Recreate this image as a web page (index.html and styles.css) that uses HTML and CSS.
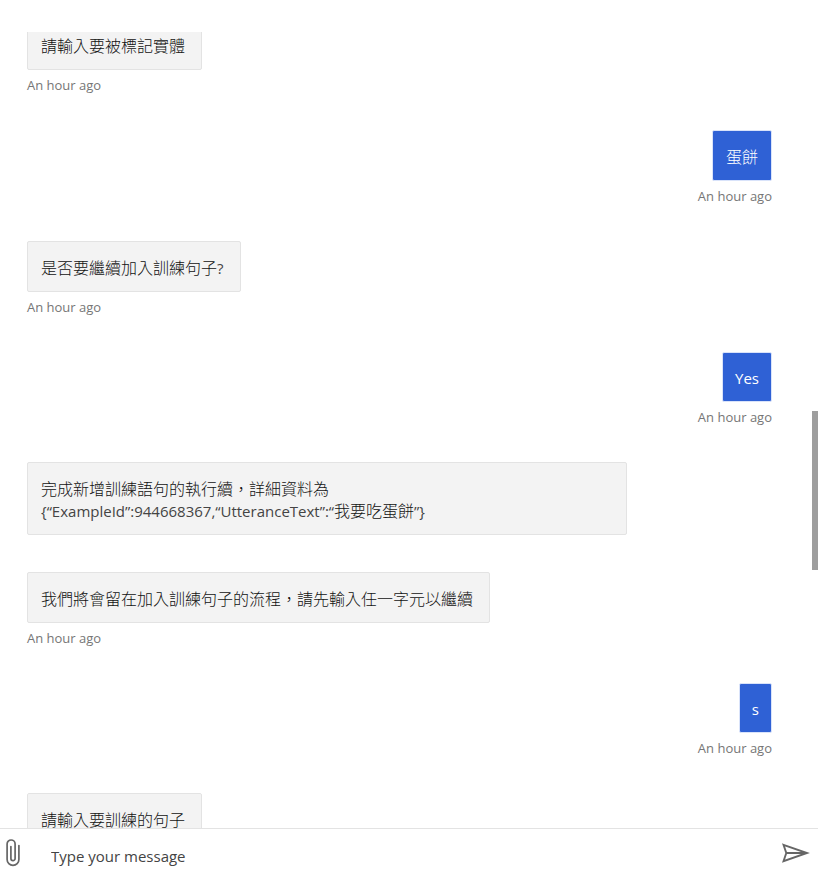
FILE: index.html
```html
<!DOCTYPE html>
<html lang="zh-Hant">
<head>
<meta charset="utf-8">
<meta name="viewport" content="width=device-width, initial-scale=1">
<title>Web Chat</title>
<link rel="stylesheet" href="styles.css">
</head>
<body>
<main class="chat">
  <section class="transcript" aria-label="Conversation">
    <ol class="messages">
      <li class="message bot">
        <p class="bubble">請輸入要被標記實體</p>
        <span class="time">An hour ago</span>
      </li>
      <li class="message user">
        <p class="bubble">蛋餅</p>
        <span class="time">An hour ago</span>
      </li>
      <li class="message bot">
        <p class="bubble">是否要繼續加入訓練句子<span class="latin">?</span></p>
        <span class="time">An hour ago</span>
      </li>
      <li class="message user">
        <p class="bubble short"><span class="latin">Yes</span></p>
        <span class="time">An hour ago</span>
      </li>
      <li class="message bot">
        <p class="bubble full">完成新增訓練語句的執行續，詳細資料為<br><span class="latin">{“ExampleId”:944668367,“UtteranceText”:“</span>我要吃蛋餅<span class="latin">”}</span></p>
      </li>
      <li class="message bot">
        <p class="bubble">我們將會留在加入訓練句子的流程，請先輸入任一字元以繼續</p>
        <span class="time">An hour ago</span>
      </li>
      <li class="message user">
        <p class="bubble short"><span class="latin">s</span></p>
        <span class="time">An hour ago</span>
      </li>
      <li class="message bot">
        <p class="bubble">請輸入要訓練的句子</p>
      </li>
    </ol>
    <div class="scroll-thumb"></div>
  </section>
  <form class="composer">
    <button class="icon-button" type="button" aria-label="Attach file">
      <svg width="14" height="28" viewBox="0 0 14 28" fill="none" stroke="#666" stroke-width="1.7" stroke-linecap="round">
        <path d="M12.900 6.500V20.500a5.900 5.900 0 0 1-11.800 0V5a4 4 0 0 1 8 0V19.500a2.100 2.100 0 0 1-4.200 0V7.500"/>
      </svg>
    </button>
    <input class="entry" type="text" aria-label="Type your message" placeholder="Type your message">
    <button class="icon-button" type="button" aria-label="Send">
      <svg width="28" height="20" viewBox="0 0 28 20" fill="none" stroke="#666" stroke-width="1.900">
        <path d="M1.500 1.800L25 10L1.500 18.200L4.300 10ZM4.300 10H24"/>
      </svg>
    </button>
  </form>
</main>
</body>
</html>
```
FILE: styles.css
```css
* {
  box-sizing: border-box;
}

body {
  margin: 0;
  background: #fff;
  color: #111;
  font-family: "Open Sans", "Noto Sans CJK TC", sans-serif;
}

.chat {
  display: flex;
  flex-direction: column;
  height: 100vh;
  padding-top: 32px;
}

.transcript {
  position: relative;
  flex: 1;
  min-height: 0;
  overflow: hidden;
}

/* The list is scrolled part of the way through its first message. */
.messages {
  display: flex;
  flex-direction: column;
  gap: 37px;
  margin: -13px 0 0;
  padding: 0 46px 0 27px;
  list-style: none;
}

.message {
  display: flex;
  flex-direction: column;
  align-items: flex-start;
  gap: 7px;
}

.user {
  align-items: flex-end;
}

.bubble {
  max-width: 600px;
  margin: 0;
  padding: 14px 16px 13px 13px;
  border: 1px solid #e3e3e3;
  border-radius: 2px;
  background: #f3f3f3;
  font-family: "Noto Sans CJK TC", sans-serif;
  font-size: 16px;
  font-weight: 300;
  line-height: 22px;
}

.full {
  width: 100%;
}

.user .bubble {
  padding-right: 13px;
  border-color: #d9e3fa;
  background: #2f61d5;
  color: #fff;
}

.user .short {
  padding-inline: 12px;
  line-height: 20px;
}

.latin {
  font-family: "Open Sans", sans-serif;
  font-size: 15px;
  font-weight: 400;
  line-height: 20px;
}

.bot .latin {
  color: #444;
}

.time {
  color: #767676;
  font-size: 13px;
  line-height: 16px;
}

.scroll-thumb {
  position: absolute;
  top: 379px;
  right: 0;
  width: 6px;
  height: 20%;
  background: #9e9e9e;
}

.composer {
  display: flex;
  align-items: center;
  flex: none;
  height: 48px;
  padding: 0 8px 0 6px;
  border-top: 1px solid #e3e3e3;
}

.icon-button {
  display: flex;
  padding: 0;
  border: 0;
  background: none;
}

.entry {
  flex: 1;
  min-width: 0;
  padding: 6px 31px 0;
  border: 0;
  outline: 0;
  background: none;
  color: #444;
  font: 15px/24px "Open Sans", sans-serif;
}

.entry::placeholder {
  color: #444;
  opacity: 1;
}
```
